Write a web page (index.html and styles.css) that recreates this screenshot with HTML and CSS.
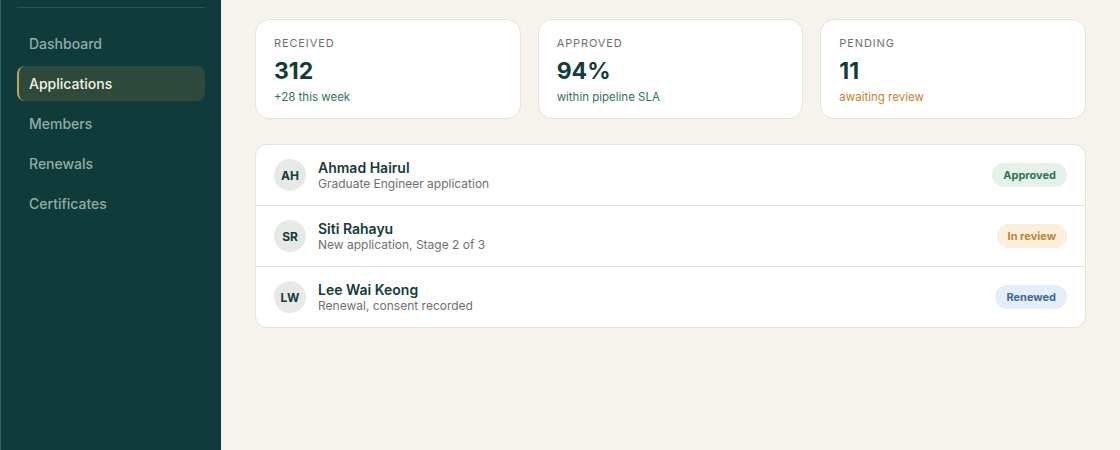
FILE: index.html
```html
<!DOCTYPE html>
<html lang="en">
<head>
  <meta charset="UTF-8" />
  <meta name="viewport" content="width=device-width, initial-scale=1.0"/>
  <title>Applications</title>
  <link rel="stylesheet" href="styles.css">
</head>
<body>

  <!-- SIDEBAR -->
  <aside class="sidebar">
    <div class="divider"></div>
    <nav class="nav">
      <a class="nav-item" href="#">Dashboard</a>
      <a class="nav-item active" href="#">Applications</a>
      <a class="nav-item" href="#">Members</a>
      <a class="nav-item" href="#">Renewals</a>
      <a class="nav-item" href="#">Certificates</a>
    </nav>
  </aside>

  <main class="main">

    <!-- STATS -->
    <section class="stats">
      <div class="stat">
        <div class="stat-label">Received</div>
        <div class="stat-value">312</div>
        <div class="stat-sub good">+28 this week</div>
      </div>
      <div class="stat">
        <div class="stat-label">Approved</div>
        <div class="stat-value">94%</div>
        <div class="stat-sub good">within pipeline SLA</div>
      </div>
      <div class="stat">
        <div class="stat-label">Pending</div>
        <div class="stat-value">11</div>
        <div class="stat-sub warn">awaiting review</div>
      </div>
    </section>

    <!-- APPLICATIONS LIST -->
    <section class="list">
      <div class="row">
        <div class="avatar">AH</div>
        <div class="who">
          <div class="name">Ahmad Hairul</div>
          <div class="desc">Graduate Engineer application</div>
        </div>
        <span class="badge approved">Approved</span>
      </div>
      <div class="row">
        <div class="avatar">SR</div>
        <div class="who">
          <div class="name">Siti Rahayu</div>
          <div class="desc">New application, Stage 2 of 3</div>
        </div>
        <span class="badge review">In review</span>
      </div>
      <div class="row">
        <div class="avatar">LW</div>
        <div class="who">
          <div class="name">Lee Wai Keong</div>
          <div class="desc">Renewal, consent recorded</div>
        </div>
        <span class="badge renewed">Renewed</span>
      </div>
    </section>

  </main>
</body>
</html>
```

FILE: styles.css
```css
body {
  margin: 0;
  font-family: 'Inter', 'Liberation Sans', sans-serif;
  background: #f5f3ec;
  display: flex;
  height: 450px;
  overflow: hidden;
}
.sidebar {
  width: 221px;
  background: #0f3b3a;
  border-left: 1px solid #3d5f5c;
  padding: 7px 16px 0 16px;
  box-sizing: border-box;
  flex-shrink: 0;
}
.divider {
  height: 1px;
  background: #2c5452;
}
.nav {
  display: flex;
  flex-direction: column;
  gap: 5px;
  margin-top: 18px;
}
.nav-item {
  display: flex;
  align-items: center;
  height: 35px;
  padding-left: 10px;
  border-radius: 8px;
  color: #93aba6;
  text-decoration: none;
  font-size: 14px;
  font-weight: 500;
  border-left: 2px solid transparent;
}
.nav-item.active {
  background: #2e4a3c;
  color: #f4f1e6;
  border-left-color: #c9a24a;
}
.main {
  flex: 1;
  padding: 19px 34px 0 34px;
}
.stats {
  display: grid;
  grid-template-columns: repeat(3, 1fr);
  gap: 17px;
}
.stat {
  background: #fff;
  border: 1px solid #e5e2d9;
  border-radius: 14px;
  padding: 16px 18px 0 18px;
  height: 100px;
  box-sizing: border-box;
}
.stat-label {
  font-size: 11px;
  letter-spacing: 0.08em;
  text-transform: uppercase;
  color: #6e716e;
}
.stat-value {
  font-size: 23px;
  font-weight: 700;
  color: #123c3a;
  margin-top: 8px;
  line-height: 26px;
}
.stat-sub {
  font-size: 11.5px;
  margin-top: 6px;
}
.good {
  color: #2f7356;
}
.warn {
  color: #c0842f;
}
.list {
  margin-top: 25px;
  background: #fff;
  border: 1px solid #e5e2d9;
  border-radius: 12px;
}
.row {
  display: flex;
  align-items: center;
  height: 60px;
  padding: 0 18px;
  border-top: 1px solid #e5e2d9;
}
.row:first-child {
  border-top: none;
}
.avatar {
  width: 32px;
  height: 32px;
  border-radius: 50%;
  background: #e6e9e6;
  color: #143c3a;
  font-size: 12px;
  font-weight: 700;
  display: flex;
  align-items: center;
  justify-content: center;
  margin-right: 12px;
}
.who {
  flex: 1;
}
.name {
  font-size: 14px;
  font-weight: 600;
  color: #143c3a;
  line-height: 17px;
}
.desc {
  font-size: 12px;
  color: #6e716e;
  line-height: 16px;
}
.badge {
  font-size: 11px;
  font-weight: 700;
  padding: 5px 11px;
  border-radius: 999px;
}
.badge.approved {
  background: #e4f2ea;
  color: #2f7356;
}
.badge.review {
  background: #fbeedb;
  color: #c0842f;
}
.badge.renewed {
  background: #e3eef8;
  color: #3d6a97;
}
```
